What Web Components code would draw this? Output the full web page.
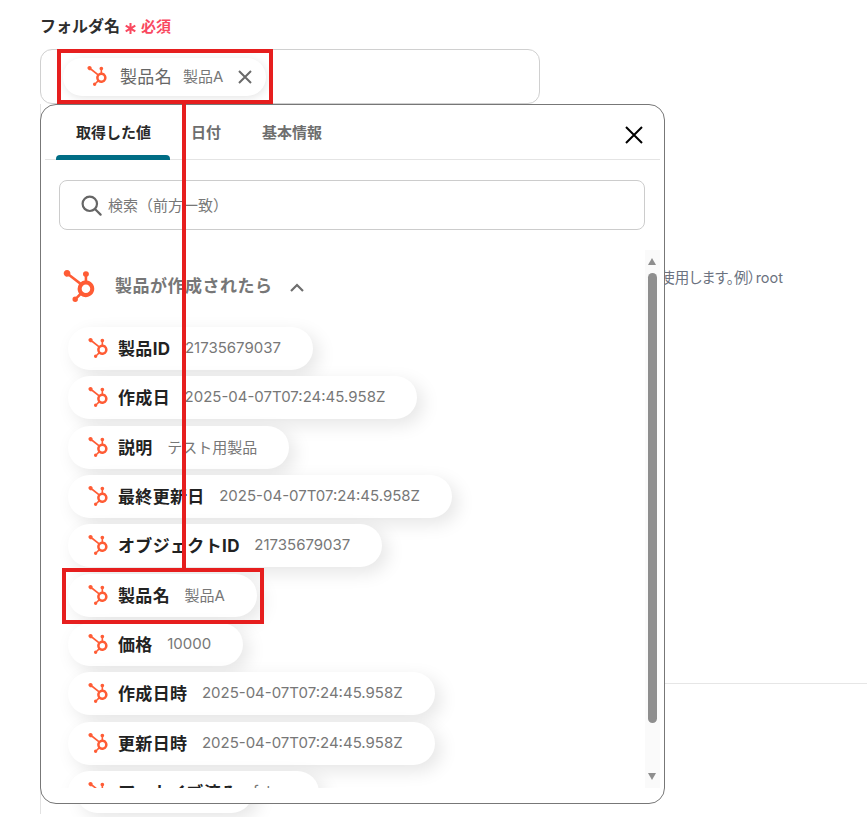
<!DOCTYPE html>
<html lang="ja">
<head>
<meta charset="utf-8">
<title>フォルダ名</title>
<style>
  html, body { margin: 0; padding: 0; background: #fff; }
  body { font-family: Inter, "Noto Sans CJK JP", sans-serif; overflow: hidden; height: 817px; position: relative; }
</style>
</head>
<body>
<folder-form>
  <form-field label="フォルダ名">
    <value-chip><span>製品名</span><span slot="value">製品A</span></value-chip>
  </form-field>
</folder-form>

<picker-popover>
  <tab-bar slot="tabs"></tab-bar>
  <search-box slot="search" placeholder="検索（前方一致）"></search-box>
  <source-header slot="header">製品が作成されたら</source-header>
  <value-pill><span>製品ID</span><span slot="value">21735679037</span></value-pill>
  <value-pill><span>作成日</span><span slot="value">2025-04-07T07:24:45.958Z</span></value-pill>
  <value-pill><span>説明</span><span slot="value">テスト用製品</span></value-pill>
  <value-pill><span>最終更新日</span><span slot="value">2025-04-07T07:24:45.958Z</span></value-pill>
  <value-pill><span>オブジェクトID</span><span slot="value">21735679037</span></value-pill>
  <value-pill><span>製品名</span><span slot="value">製品A</span></value-pill>
  <value-pill><span>価格</span><span slot="value">10000</span></value-pill>
  <value-pill><span>作成日時</span><span slot="value">2025-04-07T07:24:45.958Z</span></value-pill>
  <value-pill><span>更新日時</span><span slot="value">2025-04-07T07:24:45.958Z</span></value-pill>
  <value-pill><span>アーカイブ済み</span><span slot="value">false</span></value-pill>
</picker-popover>

<red-marks></red-marks>

<script>
const SPROCKET = "M18.164 7.93V5.084a2.198 2.198 0 001.267-1.978v-.067A2.2 2.2 0 0017.238.845h-.067a2.2 2.2 0 00-2.193 2.193v.067a2.196 2.196 0 001.252 1.973l.013.006v2.852a6.22 6.22 0 00-2.969 1.31l.012-.01-7.828-6.095A2.497 2.497 0 104.3 4.656l-.012.006 7.697 5.991a6.176 6.176 0 00-1.038 3.446c0 1.343.425 2.588 1.147 3.607l-.013-.02-2.342 2.343a1.968 1.968 0 00-.58-.095h-.002a2.033 2.033 0 102.033 2.033 1.978 1.978 0 00-.1-.595l.005.014 2.317-2.317a6.247 6.247 0 104.782-11.134l-.036-.005zm-.964 9.378a3.206 3.206 0 113.215-3.207v.002a3.206 3.206 0 01-3.207 3.206z";

class HubIcon extends HTMLElement {
  constructor() {
    super();
    this.attachShadow({ mode: "open" });
    const size = this.getAttribute("size") || 20;
    this.shadowRoot.innerHTML = `
      <style>:host { display: inline-flex; flex: none; } svg { display: block; }</style>
      <svg width="${size}" height="${size}" viewBox="0 0 24 24" fill="#ff5c35"><path d="${SPROCKET}"/></svg>`;
  }
}

class FolderForm extends HTMLElement {
  constructor() {
    super();
    this.attachShadow({ mode: "open" });
    this.shadowRoot.innerHTML = `
      <style>
        :host { display: block; height: 814px; box-sizing: border-box; padding: 16px 0 0 40px; }
        .panel { border-left: 1px solid #e2e2e2; height: 710px; display: flex; flex-direction: column; }
        .hint { margin-top: 165px; padding-right: 84px; text-align: right; font-size: 14.5px; line-height: 18px; color: #6b7280; font-feature-settings: "palt"; white-space: nowrap; }
        .rule { margin-top: 396px; border-top: 1px solid #e6e6e6; }
        .ghost {
          position: absolute; left: 76px; top: 770px; width: 177px; height: 43px;
          border-radius: 22px; background: #fff; box-shadow: 6px 6px 18px rgba(0,0,0,.1);
        }
      </style>
      <slot></slot>
      <div class="panel">
        <div class="hint">名を使用します。例）root</div>
        <div class="rule"></div>
      </div>
      <div class="ghost"></div>`;
  }
}

class FormField extends HTMLElement {
  constructor() {
    super();
    this.attachShadow({ mode: "open" });
    const label = this.getAttribute("label");
    this.shadowRoot.innerHTML = `
      <style>
        :host { display: block; width: 500px; }
        .label { display: flex; align-items: center; height: 20px; font-size: 16px; font-weight: 700; color: #2e2e2e; margin-top: -1px; }
        svg { display: block; margin: 6px 5px 0 5px; flex: none; }
        .req { color: #f9485f; font-size: 15px; font-weight: 700; margin-top: 1px; }
        .box {
          margin-top: 14px; height: 55px; box-sizing: border-box; padding: 8px 22px;
          border: 1px solid #d0d0d0; border-radius: 12px; background: #fff;
          display: flex; align-items: flex-start;
        }
      </style>
      <div class="label">${label}
        <svg width="11" height="11" viewBox="0 0 11 11" stroke="#f9485f" stroke-width="2" fill="none"><path d="M5.5 0v11M.7 2.7l9.6 5.6M10.3 2.7L.7 8.3"/></svg>
        <span class="req">必須</span></div>
      <div class="box"><slot></slot></div>`;
  }
}

class ValueChip extends HTMLElement {
  constructor() {
    super();
    this.attachShadow({ mode: "open" });
    this.shadowRoot.innerHTML = `
      <style>
        :host {
          display: inline-flex; align-items: center; height: 38px; box-sizing: border-box;
          width: 203px; padding: 0 14px 0 24px; border-radius: 19px; background: #fff;
          box-shadow: 1px 2px 8px rgba(0,0,0,.1); color: #666; font-size: 17px; letter-spacing: .02em;
        }
        .value { margin-left: 11px; font-size: 15px; color: #777; letter-spacing: 0; }
        .text { display: inline-flex; align-items: center; padding-bottom: 4px; }
        hub-icon { margin-right: 13px; margin-bottom: 2px; }
        svg { margin-left: auto; display: block; flex: none; }
      </style>
      <hub-icon size="20"></hub-icon>
      <span class="text"><slot></slot><span class="value"><slot name="value"></slot></span></span>
      <svg width="14" height="14" viewBox="0 0 14 14" stroke="#6a6a6a" stroke-width="2" fill="none"><path d="M1 1l12 12M13 1L1 13"/></svg>`;
  }
}

class PickerPopover extends HTMLElement {
  constructor() {
    super();
    this.attachShadow({ mode: "open" });
    this.shadowRoot.innerHTML = `
      <style>
        :host {
          position: absolute; left: 40px; top: 104px; width: 625px; height: 700px; box-sizing: border-box;
          border: 1px solid #777; border-radius: 16px; background: #fff;
          display: flex; flex-direction: column; overflow: hidden;
        }
        .close { position: absolute; right: 21px; top: 21px; display: block; }
        .body { display: flex; height: 538px; margin-top: 20px; }
        .list { flex: 1; min-width: 0; overflow: hidden; padding: 0 0 0 18px; }
        .items { display: flex; flex-direction: column; align-items: flex-start; gap: 6.33px; padding: 0 0 40px 9px; }
        .track {
          flex: none; width: 15px; margin-right: 4px; background: #fafafa; position: relative;
        }
        .thumb { position: absolute; left: 3px; top: 23px; width: 9px; height: 450px; border-radius: 5px; background: #8e8e8e; }
        .up, .down { position: absolute; left: 3px; width: 0; height: 0; border-left: 4.5px solid transparent; border-right: 4.5px solid transparent; }
        .up { top: 8px; border-bottom: 7px solid #8e8e8e; }
        .down { top: 523px; border-top: 7px solid #8e8e8e; }
      </style>
      <slot name="tabs"></slot>
      <svg class="close" width="18" height="18" viewBox="0 0 18 18" stroke="#000" stroke-width="2" fill="none"><path d="M1 1l16 16M17 1L1 17"/></svg>
      <slot name="search"></slot>
      <div class="body">
        <div class="list">
          <slot name="header"></slot>
          <div class="items"><slot></slot></div>
        </div>
        <div class="track"><i class="up"></i><i class="thumb"></i><i class="down"></i></div>
      </div>`;
  }
}

class TabBar extends HTMLElement {
  constructor() {
    super();
    this.attachShadow({ mode: "open" });
    this.shadowRoot.innerHTML = `
      <style>
        :host {
          display: flex; height: 55px; box-sizing: border-box; margin: 0 4px; padding-left: 11px;
          border-bottom: 1px solid #e4e4e4; font-size: 15px; font-weight: 700; color: #6e6e6e;
        }
        .tab { position: relative; height: 55px; box-sizing: border-box; padding: 19px 20px 0; line-height: 18px; margin-right: 1px; white-space: nowrap; }
        .on { color: #2a2a2a; padding-right: 19px; }
        .on::after {
          content: ""; position: absolute; left: 0; right: 0; bottom: 0; height: 5px;
          background: #006d85; border-radius: 4px 4px 0 0;
        }
      </style>
      <div class="tab on">取得した値</div>
      <div class="tab">日付</div>
      <div class="tab">基本情報</div>`;
  }
}

class SearchBox extends HTMLElement {
  constructor() {
    super();
    this.attachShadow({ mode: "open" });
    this.shadowRoot.innerHTML = `
      <style>
        :host {
          display: flex; align-items: center; gap: 6px; height: 50px; box-sizing: border-box; margin: 20px 19px 0 18px;
          padding-left: 21px; border: 1px solid #ccc; border-radius: 8px; font-size: 15px; color: #777;
        }
        span { padding-bottom: 2px; }
        svg { display: block; flex: none; }
      </style>
      <svg width="21" height="21" viewBox="0 0 21 21" fill="none" stroke="#666" stroke-width="2.2" stroke-linecap="round"><circle cx="8.8" cy="8.8" r="7.2"/><path d="M14.2 14.2l5.4 5.4"/></svg>
      <span>${this.getAttribute("placeholder")}</span>`;
  }
}

class SourceHeader extends HTMLElement {
  constructor() {
    super();
    this.attachShadow({ mode: "open" });
    this.shadowRoot.innerHTML = `
      <style>
        :host {
          display: flex; align-items: center; height: 77px; box-sizing: border-box; padding: 0 0 6px 4px;
          font-size: 17px; font-weight: 700; letter-spacing: .03em; color: #777;
        }
        hub-icon { margin-right: 20px; }
        .text { padding-bottom: 2px; }
        svg { margin: 3px 0 0 17px; display: block; }
      </style>
      <hub-icon size="32"></hub-icon>
      <span class="text"><slot></slot></span>
      <svg width="14" height="9" viewBox="0 0 14 9" fill="none" stroke="#6e6e6e" stroke-width="2.2"><path d="M1 8l6-6 6 6"/></svg>`;
  }
}

class ValuePill extends HTMLElement {
  constructor() {
    super();
    this.attachShadow({ mode: "open" });
    this.shadowRoot.innerHTML = `
      <style>
        :host {
          display: inline-flex; align-items: center; flex: none; height: 43px; box-sizing: border-box;
          padding: 0 32px 0 20px; border-radius: 22px; background: #fff;
          box-shadow: 6px 6px 18px rgba(0,0,0,.1); font-size: 17px; font-weight: 700; letter-spacing: .02em; color: #222;
        }
        hub-icon { margin-right: 10px; margin-bottom: 1px; }
        .text { display: inline-flex; align-items: center; padding-bottom: 2px; }
        .value { margin-left: 14.5px; font-size: 15px; font-weight: 400; letter-spacing: 0; color: #777; }
      </style>
      <hub-icon size="20"></hub-icon>
      <span class="text"><slot></slot><span class="value"><slot name="value"></slot></span></span>`;
  }
}

class RedMarks extends HTMLElement {
  constructor() {
    super();
    this.attachShadow({ mode: "open" });
    this.shadowRoot.innerHTML = `
      <style>
        :host { position: absolute; inset: 0; pointer-events: none; display: block; }
        div { position: absolute; box-sizing: border-box; border: 4px solid #e61e1e; }
        .a { left: 57px; top: 49px; width: 216px; height: 55px; }
        .b { left: 62px; top: 568px; width: 202px; height: 56px; }
        .c { left: 182px; top: 103px; width: 4px; height: 467px; border: 0; background: #e61e1e; }
      </style>
      <div class="a"></div><div class="c"></div><div class="b"></div>`;
  }
}

customElements.define("hub-icon", HubIcon);
customElements.define("folder-form", FolderForm);
customElements.define("form-field", FormField);
customElements.define("value-chip", ValueChip);
customElements.define("picker-popover", PickerPopover);
customElements.define("tab-bar", TabBar);
customElements.define("search-box", SearchBox);
customElements.define("source-header", SourceHeader);
customElements.define("value-pill", ValuePill);
customElements.define("red-marks", RedMarks);
</script>
</body>
</html>
